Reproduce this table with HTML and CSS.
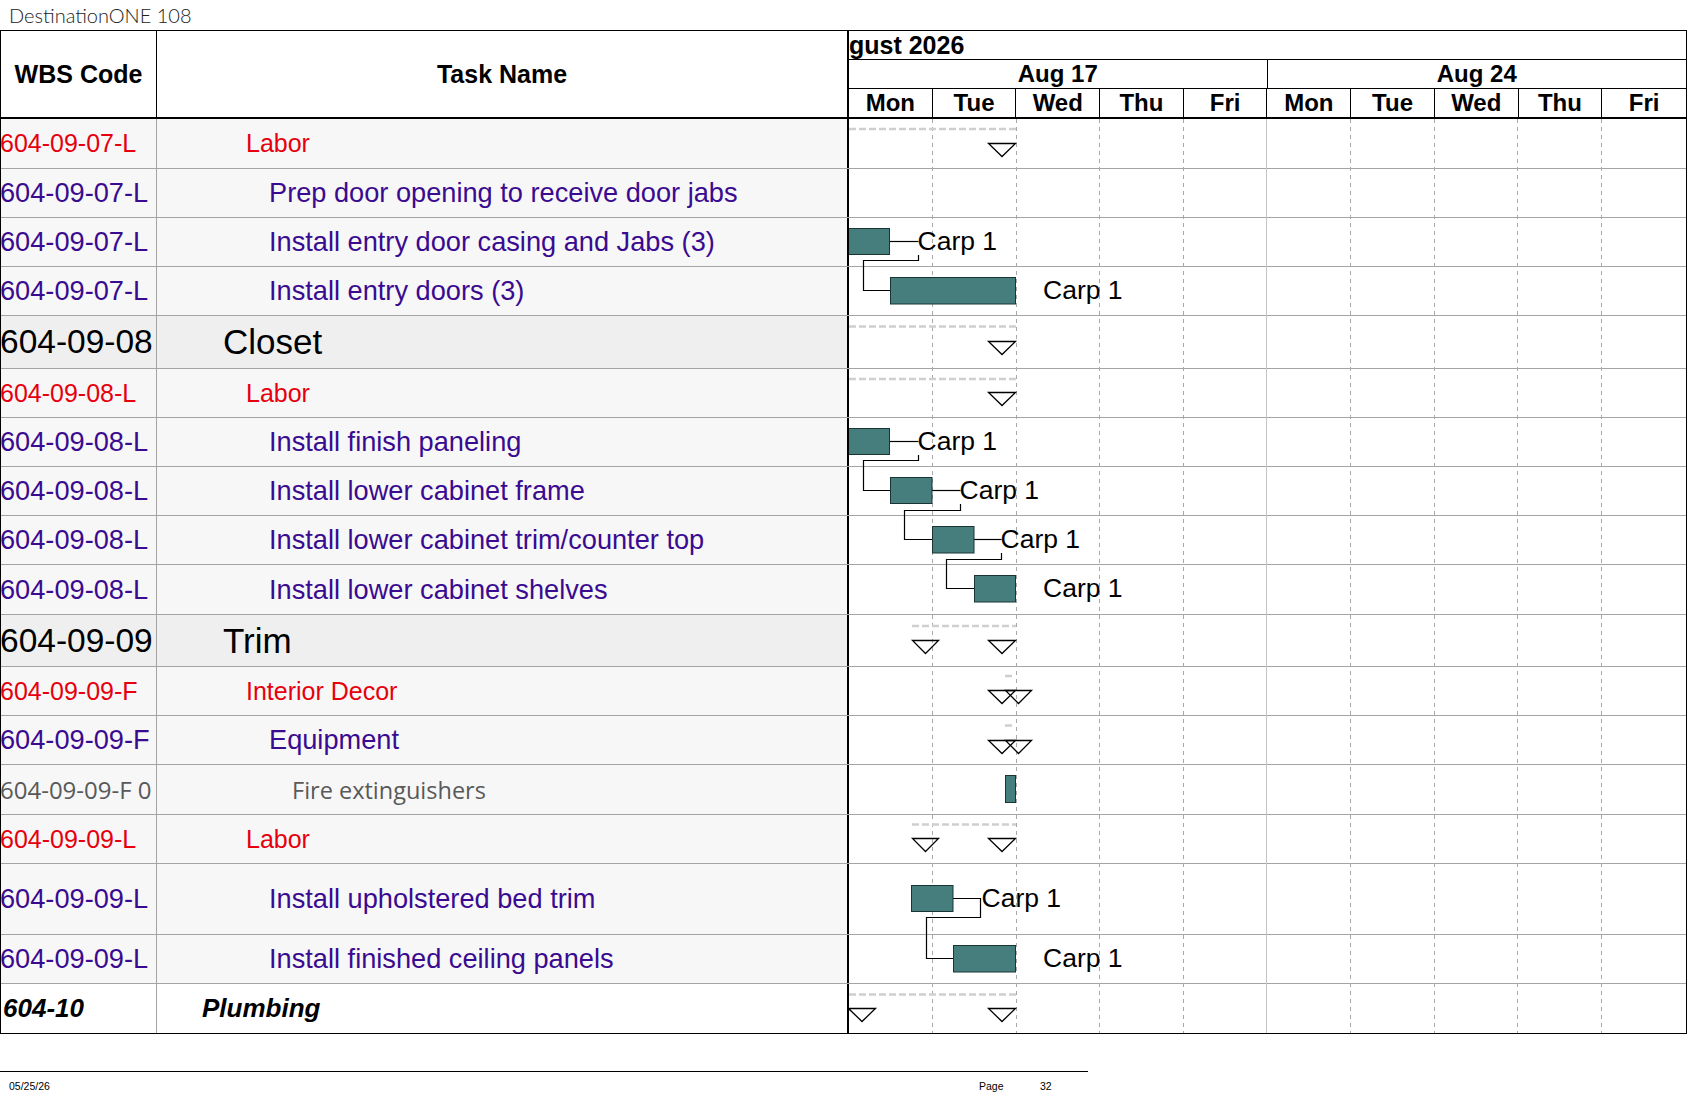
FILE: index.html
```html
<!DOCTYPE html>
<html>
<head>
<meta charset="utf-8">
<title>DestinationONE 108</title>
<link rel="stylesheet" href="styles.css">
</head>
<body>
<div class="page">
  <div class="title">DestinationONE 108</div>
  <div class="sheet">
    <div class="head">
      <div class="h-wbs">WBS Code</div>
      <div class="h-task">Task Name</div>
      <div class="h-gantt">
        <div class="h-month">gust 2026</div>
        <div class="h-weeks">
          <div class="h-week">Aug 17</div>
          <div class="h-week">Aug 24</div>
        </div>
        <div class="h-days">
          <div class="h-day">Mon</div><div class="h-day">Tue</div><div class="h-day">Wed</div><div class="h-day">Thu</div><div class="h-day">Fri</div>
          <div class="h-day">Mon</div><div class="h-day">Tue</div><div class="h-day">Wed</div><div class="h-day">Thu</div><div class="h-day">Fri</div>
        </div>
      </div>
    </div>
    <div class="body">
      <div class="row h50 red"><div class="wbs">604-09-07-L</div><div class="task i2">Labor</div><div class="gcell"></div></div>
      <div class="row pur"><div class="wbs">604-09-07-L</div><div class="task i3">Prep door opening to receive door jabs</div><div class="gcell"></div></div>
      <div class="row pur"><div class="wbs">604-09-07-L</div><div class="task i3">Install entry door casing and Jabs (3)</div><div class="gcell"></div></div>
      <div class="row pur"><div class="wbs">604-09-07-L</div><div class="task i3">Install entry doors (3)</div><div class="gcell"></div></div>
      <div class="row h53 sum"><div class="wbs">604-09-08</div><div class="task i1">Closet</div><div class="gcell"></div></div>
      <div class="row red"><div class="wbs">604-09-08-L</div><div class="task i2">Labor</div><div class="gcell"></div></div>
      <div class="row pur"><div class="wbs">604-09-08-L</div><div class="task i3">Install finish paneling</div><div class="gcell"></div></div>
      <div class="row pur"><div class="wbs">604-09-08-L</div><div class="task i3">Install lower cabinet frame</div><div class="gcell"></div></div>
      <div class="row pur"><div class="wbs">604-09-08-L</div><div class="task i3">Install lower cabinet trim/counter top</div><div class="gcell"></div></div>
      <div class="row h50 pur"><div class="wbs">604-09-08-L</div><div class="task i3">Install lower cabinet shelves</div><div class="gcell"></div></div>
      <div class="row h52 sum"><div class="wbs">604-09-09</div><div class="task i1">Trim</div><div class="gcell"></div></div>
      <div class="row red"><div class="wbs">604-09-09-F</div><div class="task i2">Interior Decor</div><div class="gcell"></div></div>
      <div class="row pur"><div class="wbs">604-09-09-F</div><div class="task i3">Equipment</div><div class="gcell"></div></div>
      <div class="row h50 gray"><div class="wbs">604-09-09-F 0</div><div class="task i4">Fire extinguishers</div><div class="gcell"></div></div>
      <div class="row red"><div class="wbs">604-09-09-L</div><div class="task i2">Labor</div><div class="gcell"></div></div>
      <div class="row h71 pur"><div class="wbs">604-09-09-L</div><div class="task i3">Install upholstered bed trim</div><div class="gcell"></div></div>
      <div class="row pur"><div class="wbs">604-09-09-L</div><div class="task i3">Install finished ceiling panels</div><div class="gcell"></div></div>
      <div class="row last plumb"><div class="wbs">604-10</div><div class="task i0">Plumbing</div><div class="gcell"></div></div>

      <svg class="chart" viewBox="0 0 837 914" width="837" height="914" xmlns="http://www.w3.org/2000/svg">
        <g class="days">
          <line x1="83.5" y1="0" x2="83.5" y2="914"/>
          <line x1="167.5" y1="0" x2="167.5" y2="914"/>
          <line x1="250.5" y1="0" x2="250.5" y2="914"/>
          <line x1="334.5" y1="0" x2="334.5" y2="914"/>
          <line x1="501.5" y1="0" x2="501.5" y2="914"/>
          <line x1="585.5" y1="0" x2="585.5" y2="914"/>
          <line x1="668.5" y1="0" x2="668.5" y2="914"/>
          <line x1="752.5" y1="0" x2="752.5" y2="914"/>
        </g>
        <line class="week" x1="417.5" y1="0" x2="417.5" y2="914"/>

        <g class="sumline">
          <line x1="0" y1="10" x2="167" y2="10"/>
          <line x1="0" y1="207.5" x2="167" y2="207.5"/>
          <line x1="0" y1="260" x2="167" y2="260"/>
          <line x1="63" y1="507" x2="167" y2="507"/>
          <line x1="156" y1="557" x2="165" y2="557"/>
          <line x1="156" y1="606.5" x2="165" y2="606.5"/>
          <line x1="63" y1="705.5" x2="167" y2="705.5"/>
          <line x1="0" y1="875.5" x2="167" y2="875.5"/>
        </g>

        <g class="tri">
          <polygon points="139.5,24.5 166.5,24.5 153,37.5"/>
          <polygon points="139.5,222.5 166.5,222.5 153,235.5"/>
          <polygon points="139.5,273.5 166.5,273.5 153,286.5"/>
          <polygon points="63.5,521.5 89.5,521.5 76.5,534.5"/>
          <polygon points="139.5,521.5 166.5,521.5 153,534.5"/>
          <polygon points="139.5,571.5 166.5,571.5 153,584.5"/>
          <polygon points="156.5,571.5 182.5,571.5 169.5,584.5"/>
          <polygon points="139.5,621.5 166.5,621.5 153,634.5"/>
          <polygon points="156.5,621.5 182.5,621.5 169.5,634.5"/>
          <polygon points="63.5,719.5 89.5,719.5 76.5,732.5"/>
          <polygon points="139.5,719.5 166.5,719.5 153,732.5"/>
          <polygon points="-0.5,889.5 26.5,889.5 13,902.5"/>
          <polygon points="139.5,889.5 166.5,889.5 153,902.5"/>
        </g>

        <g class="link">
          <line x1="40.5" y1="122.5" x2="69.5" y2="122.5"/>
          <polyline points="69.5,136 69.5,141.5 14.5,141.5 14.5,171.5 41.5,171.5"/>
          <line x1="40.5" y1="322.5" x2="69.5" y2="322.5"/>
          <polyline points="69.5,336 69.5,341.5 14.5,341.5 14.5,371.5 41.5,371.5"/>
          <line x1="83" y1="371.5" x2="111.5" y2="371.5"/>
          <polyline points="111.5,385 111.5,391.5 55.5,391.5 55.5,420.5 83.5,420.5"/>
          <line x1="125" y1="420.5" x2="152.5" y2="420.5"/>
          <polyline points="152.5,434 152.5,440.5 97.5,440.5 97.5,469.5 125.5,469.5"/>
          <polyline points="104,779.5 131.5,779.5 131.5,798.5 77.5,798.5 77.5,839.5 104.5,839.5"/>
        </g>

        <g class="bar">
          <rect x="-1" y="109.5" width="41.5" height="26"/>
          <rect x="41.5" y="158.5" width="125" height="26.5"/>
          <rect x="-1" y="309.5" width="41.5" height="26"/>
          <rect x="41.5" y="358.5" width="41.5" height="26"/>
          <rect x="83.5" y="407.5" width="41.5" height="26.5"/>
          <rect x="125.5" y="456.5" width="41" height="26.5"/>
          <rect x="156.5" y="656.5" width="10" height="27"/>
          <rect x="62.5" y="766.5" width="41.5" height="26"/>
          <rect x="104.5" y="826.5" width="62" height="26.5"/>
        </g>

        <g class="lbl">
          <text x="68.5" y="131">Carp 1</text>
          <text x="194" y="180">Carp 1</text>
          <text x="68.5" y="331">Carp 1</text>
          <text x="110.5" y="380">Carp 1</text>
          <text x="151.5" y="429">Carp 1</text>
          <text x="194" y="478">Carp 1</text>
          <text x="132.5" y="787.5">Carp 1</text>
          <text x="194" y="848">Carp 1</text>
        </g>
      </svg>
    </div>
  </div>
  <div class="footer">
    <div class="f-date">05/25/26</div>
    <div class="f-page">Page</div>
    <div class="f-num">32</div>
  </div>
</div>
</body>
</html>
```

FILE: styles.css
```css
* { box-sizing: border-box; }

body {
  margin: 0;
  background: #ffffff;
  font-family: "Liberation Sans", Arial, sans-serif;
  color: #000000;
}

.page { width: 1687px; }

.title {
  height: 30px;
  padding: 3px 0 0 9px;
  font-family: Lato, "Open Sans", sans-serif;
  font-weight: 300;
  font-size: 20px;
  line-height: 24px;
  color: #222222;
}

.sheet {
  width: 1687px;
  border: 1px solid #000;
}

/* ---------- header ---------- */
.head {
  display: flex;
  height: 88px;
  border-bottom: 2px solid #000;
  font-weight: bold;
  font-size: 24px;
}
.h-wbs {
  width: 156px;
  border-right: 1px solid #000;
  display: flex;
  align-items: center;
  justify-content: center;
  font-size: 25px;
}
.h-task {
  width: 690px;
  display: flex;
  align-items: center;
  justify-content: center;
  font-size: 25px;
}
.h-gantt {
  width: 839px;
  border-left: 2px solid #000;
  display: flex;
  flex-direction: column;
}
.h-month {
  height: 30px;
  border-bottom: 1px solid #000;
  display: flex;
  align-items: center;
  font-size: 25px;
  line-height: 1;
}
.h-weeks {
  height: 29px;
  border-bottom: 1px solid #000;
  display: grid;
  grid-template-columns: 1fr 1fr;
}
.h-week {
  display: flex;
  align-items: center;
  justify-content: center;
}
.h-week:first-child { border-right: 1px solid #000; }
.h-days {
  flex: 1;
  display: grid;
  grid-template-columns: repeat(10, 1fr);
}
.h-day {
  display: flex;
  align-items: center;
  justify-content: center;
  border-right: 1px solid #000;
}
.h-day:last-child { border-right: none; }

/* ---------- body rows ---------- */
.body { position: relative; }

.row {
  display: flex;
  height: 49px;
  border-bottom: 1px solid #a4a4a4;
  white-space: nowrap;
}
.row.h50 { height: 50px; }
.row.h52 { height: 52px; }
.row.h53 { height: 53px; }
.row.h71 { height: 71px; }
.row.last { border-bottom: none; }

.wbs {
  width: 156px;
  border-right: 1px solid #a4a4a4;
  background: #f7f7f7;
  display: flex;
  align-items: center;
  overflow: hidden;
  text-indent: -1px;
}
.task {
  width: 690px;
  background: #f7f7f7;
  display: flex;
  align-items: center;
  overflow: hidden;
}
.gcell {
  width: 839px;
  border-left: 2px solid #000;
  background: #fff;
}

.i0 { padding-left: 45px; }
.i1 { padding-left: 66px; }
.i2 { padding-left: 89px; }
.i3 { padding-left: 112px; }
.i4 { padding-left: 135px; }

.red { color: #e6000d; font-size: 25px; }
.pur { color: #3a0b90; font-size: 27.2px; }
.sum { color: #000; font-size: 35px; }
.sum .wbs { font-size: 33.5px; }
.sum .wbs, .sum .task { background: #efefef; }
.gray {
  color: #595959;
  font-family: "Open Sans", "Noto Sans", sans-serif;
  font-size: 23.5px;
}
.gray .wbs { font-size: 24px; }
.plumb { font-weight: bold; font-style: italic; font-size: 26px; }
.plumb .wbs, .plumb .task { background: #ffffff; }
.plumb .wbs { text-indent: 2px; }

/* ---------- gantt drawing ---------- */
.chart {
  position: absolute;
  left: 848px;
  top: 0;
  width: 837px;
  height: 914px;
  overflow: hidden;
}
.days line {
  stroke: #a8a8a8;
  stroke-width: 1;
  stroke-dasharray: 4 4;
}
.week {
  stroke: #c4c4c4;
  stroke-width: 1;
}
.sumline line {
  stroke: #cfcfcf;
  stroke-width: 2.5;
  stroke-dasharray: 7 3;
}
.tri polygon {
  fill: none;
  stroke: #000;
  stroke-width: 1.3;
  stroke-linejoin: miter;
}
.link line, .link polyline {
  fill: none;
  stroke: #000;
  stroke-width: 1.2;
}
.bar rect {
  fill: #467e7e;
  stroke: #1b3535;
  stroke-width: 1;
}
.lbl text {
  font-family: "Liberation Sans", Arial, sans-serif;
  font-size: 26.5px;
  fill: #000;
}

/* ---------- footer ---------- */
.footer {
  width: 1088px;
  margin-top: 37px;
  border-top: 1px solid #000;
  display: grid;
  grid-template-columns: 979px 61px 1fr;
  padding-top: 7px;
  font-size: 10.5px;
  line-height: 14px;
}
.f-date { padding-left: 9px; }
```
